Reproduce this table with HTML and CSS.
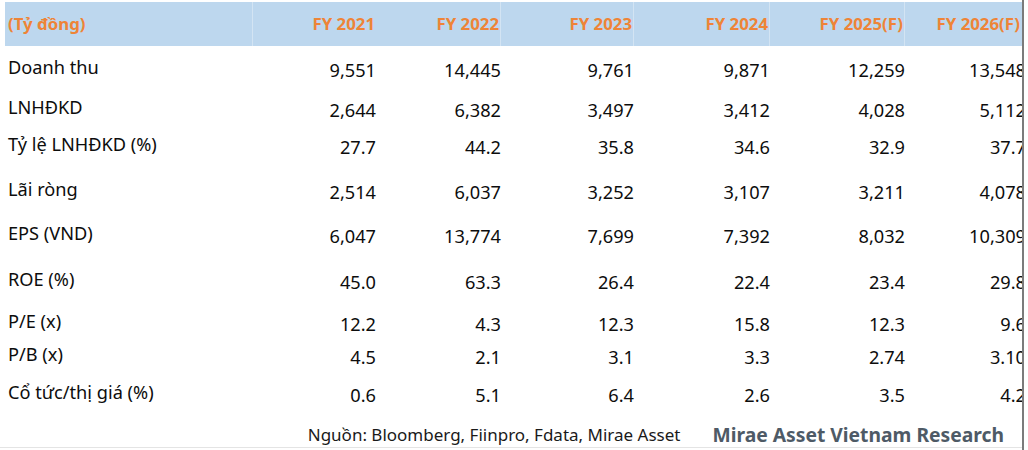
FILE: index.html
```html
<!DOCTYPE html>
<html lang="vi">
<head>
<meta charset="utf-8">
<title>Dự phóng tài chính</title>
<link rel="stylesheet" href="styles.css">
</head>
<body>
<div class="sheet">
  <div class="head">
    <div class="hc hc-label sep">(Tỷ đồng)</div>
    <div class="hc">FY 2021</div>
    <div class="hc sep">FY 2022</div>
    <div class="hc sep">FY 2023</div>
    <div class="hc sep">FY 2024</div>
    <div class="hc sep">FY 2025(F)</div>
    <div class="hc hc-last">FY 2026(F)</div>
  </div>

  <div class="body">
    <div class="row h40"><div class="lab">Doanh thu</div><div class="num">9,551</div><div class="num">14,445</div><div class="num">9,761</div><div class="num">9,871</div><div class="num">12,259</div><div class="num last">13,548</div></div>
    <div class="row h37"><div class="lab">LNHĐKD</div><div class="num">2,644</div><div class="num">6,382</div><div class="num">3,497</div><div class="num">3,412</div><div class="num">4,028</div><div class="num last">5,112</div></div>
    <div class="row h45"><div class="lab">Tỷ lệ LNHĐKD (%)</div><div class="num">27.7</div><div class="num">44.2</div><div class="num">35.8</div><div class="num">34.6</div><div class="num">32.9</div><div class="num last">37.7</div></div>
    <div class="row h44"><div class="lab">Lãi ròng</div><div class="num">2,514</div><div class="num">6,037</div><div class="num">3,252</div><div class="num">3,107</div><div class="num">3,211</div><div class="num last">4,078</div></div>
    <div class="row h46"><div class="lab">EPS (VND)</div><div class="num">6,047</div><div class="num">13,774</div><div class="num">7,699</div><div class="num">7,392</div><div class="num">8,032</div><div class="num last">10,309</div></div>
    <div class="row h42"><div class="lab">ROE (%)</div><div class="num">45.0</div><div class="num">63.3</div><div class="num">26.4</div><div class="num">22.4</div><div class="num">23.4</div><div class="num last">29.8</div></div>
    <div class="row h33"><div class="lab">P/E (x)</div><div class="num">12.2</div><div class="num">4.3</div><div class="num">12.3</div><div class="num">15.8</div><div class="num">12.3</div><div class="num last">9.6</div></div>
    <div class="row h38"><div class="lab">P/B (x)</div><div class="num">4.5</div><div class="num">2.1</div><div class="num">3.1</div><div class="num">3.3</div><div class="num">2.74</div><div class="num last">3.10</div></div>
    <div class="row h39"><div class="lab">Cổ tức/thị giá (%)</div><div class="num">0.6</div><div class="num">5.1</div><div class="num">6.4</div><div class="num">2.6</div><div class="num">3.5</div><div class="num last">4.2</div></div>
  </div>

  <div class="foot">
    <span class="src">Nguồn: Bloomberg, Fiinpro, Fdata, Mirae Asset</span>
    <span class="brand">Mirae Asset Vietnam Research</span>
  </div>
</div>
</body>
</html>
```

FILE: styles.css
```css
* { box-sizing: border-box; }

html, body {
  margin: 0;
  padding: 0;
  background: #ffffff;
}

body {
  font-family: "Noto Sans", "Open Sans", "DejaVu Sans", sans-serif;
  color: #0d0d0d;
  width: 1028px;
  height: 450px;
  overflow: hidden;
}

.sheet {
  width: 1024px;
  height: 450px;
  overflow: hidden;
  border-right: 2px solid #7b7b7b;
  padding-top: 2px;
}

.head,
.row {
  display: grid;
  grid-template-columns: 248px 123px 125px 133px 136px 135px 130px;
  margin-left: 5px;
  width: 1030px;
}

.head {
  height: 44px;
  background: #bdd7ee;
  align-items: center;
}

.hc {
  font-size: 16.8px;
  font-weight: 700;
  color: #ee8437;
  text-align: right;
  padding-right: 1px;
  line-height: 44px;
  height: 44px;
}

.hc.sep {
  border-right: 1px solid #d3e4f3;
}

.hc-label {
  text-align: left;
  padding-left: 3px;
}

.hc-last {
  padding-right: 15px;
}

.body {
  padding-top: 12px;
}

.row {
  align-items: start;
  font-size: 18.2px;
  line-height: 24px;
}

.h40 { height: 40px; }
.h37 { height: 37px; }
.h45 { height: 45px; }
.h44 { height: 44px; }
.h46 { height: 46px; }
.h42 { height: 42px; }
.h33 { height: 33px; }
.h38 { height: 38px; }
.h39 { height: 39px; }

.lab {
  padding-left: 3px;
  margin-top: -3px;
  white-space: nowrap;
}

.num {
  text-align: right;
  white-space: nowrap;
}

.num.last {
  padding-right: 9px;
}

.foot {
  display: flex;
  justify-content: flex-end;
  align-items: center;
  gap: 32px;
  height: 26px;
  padding-right: 18px;
  border-bottom: 1px solid #e4e4e4;
}

.src {
  font-size: 17px;
  color: #1a1a1a;
}

.brand {
  font-size: 19.3px;
  font-weight: 700;
  color: #4e5a66;
}
```
